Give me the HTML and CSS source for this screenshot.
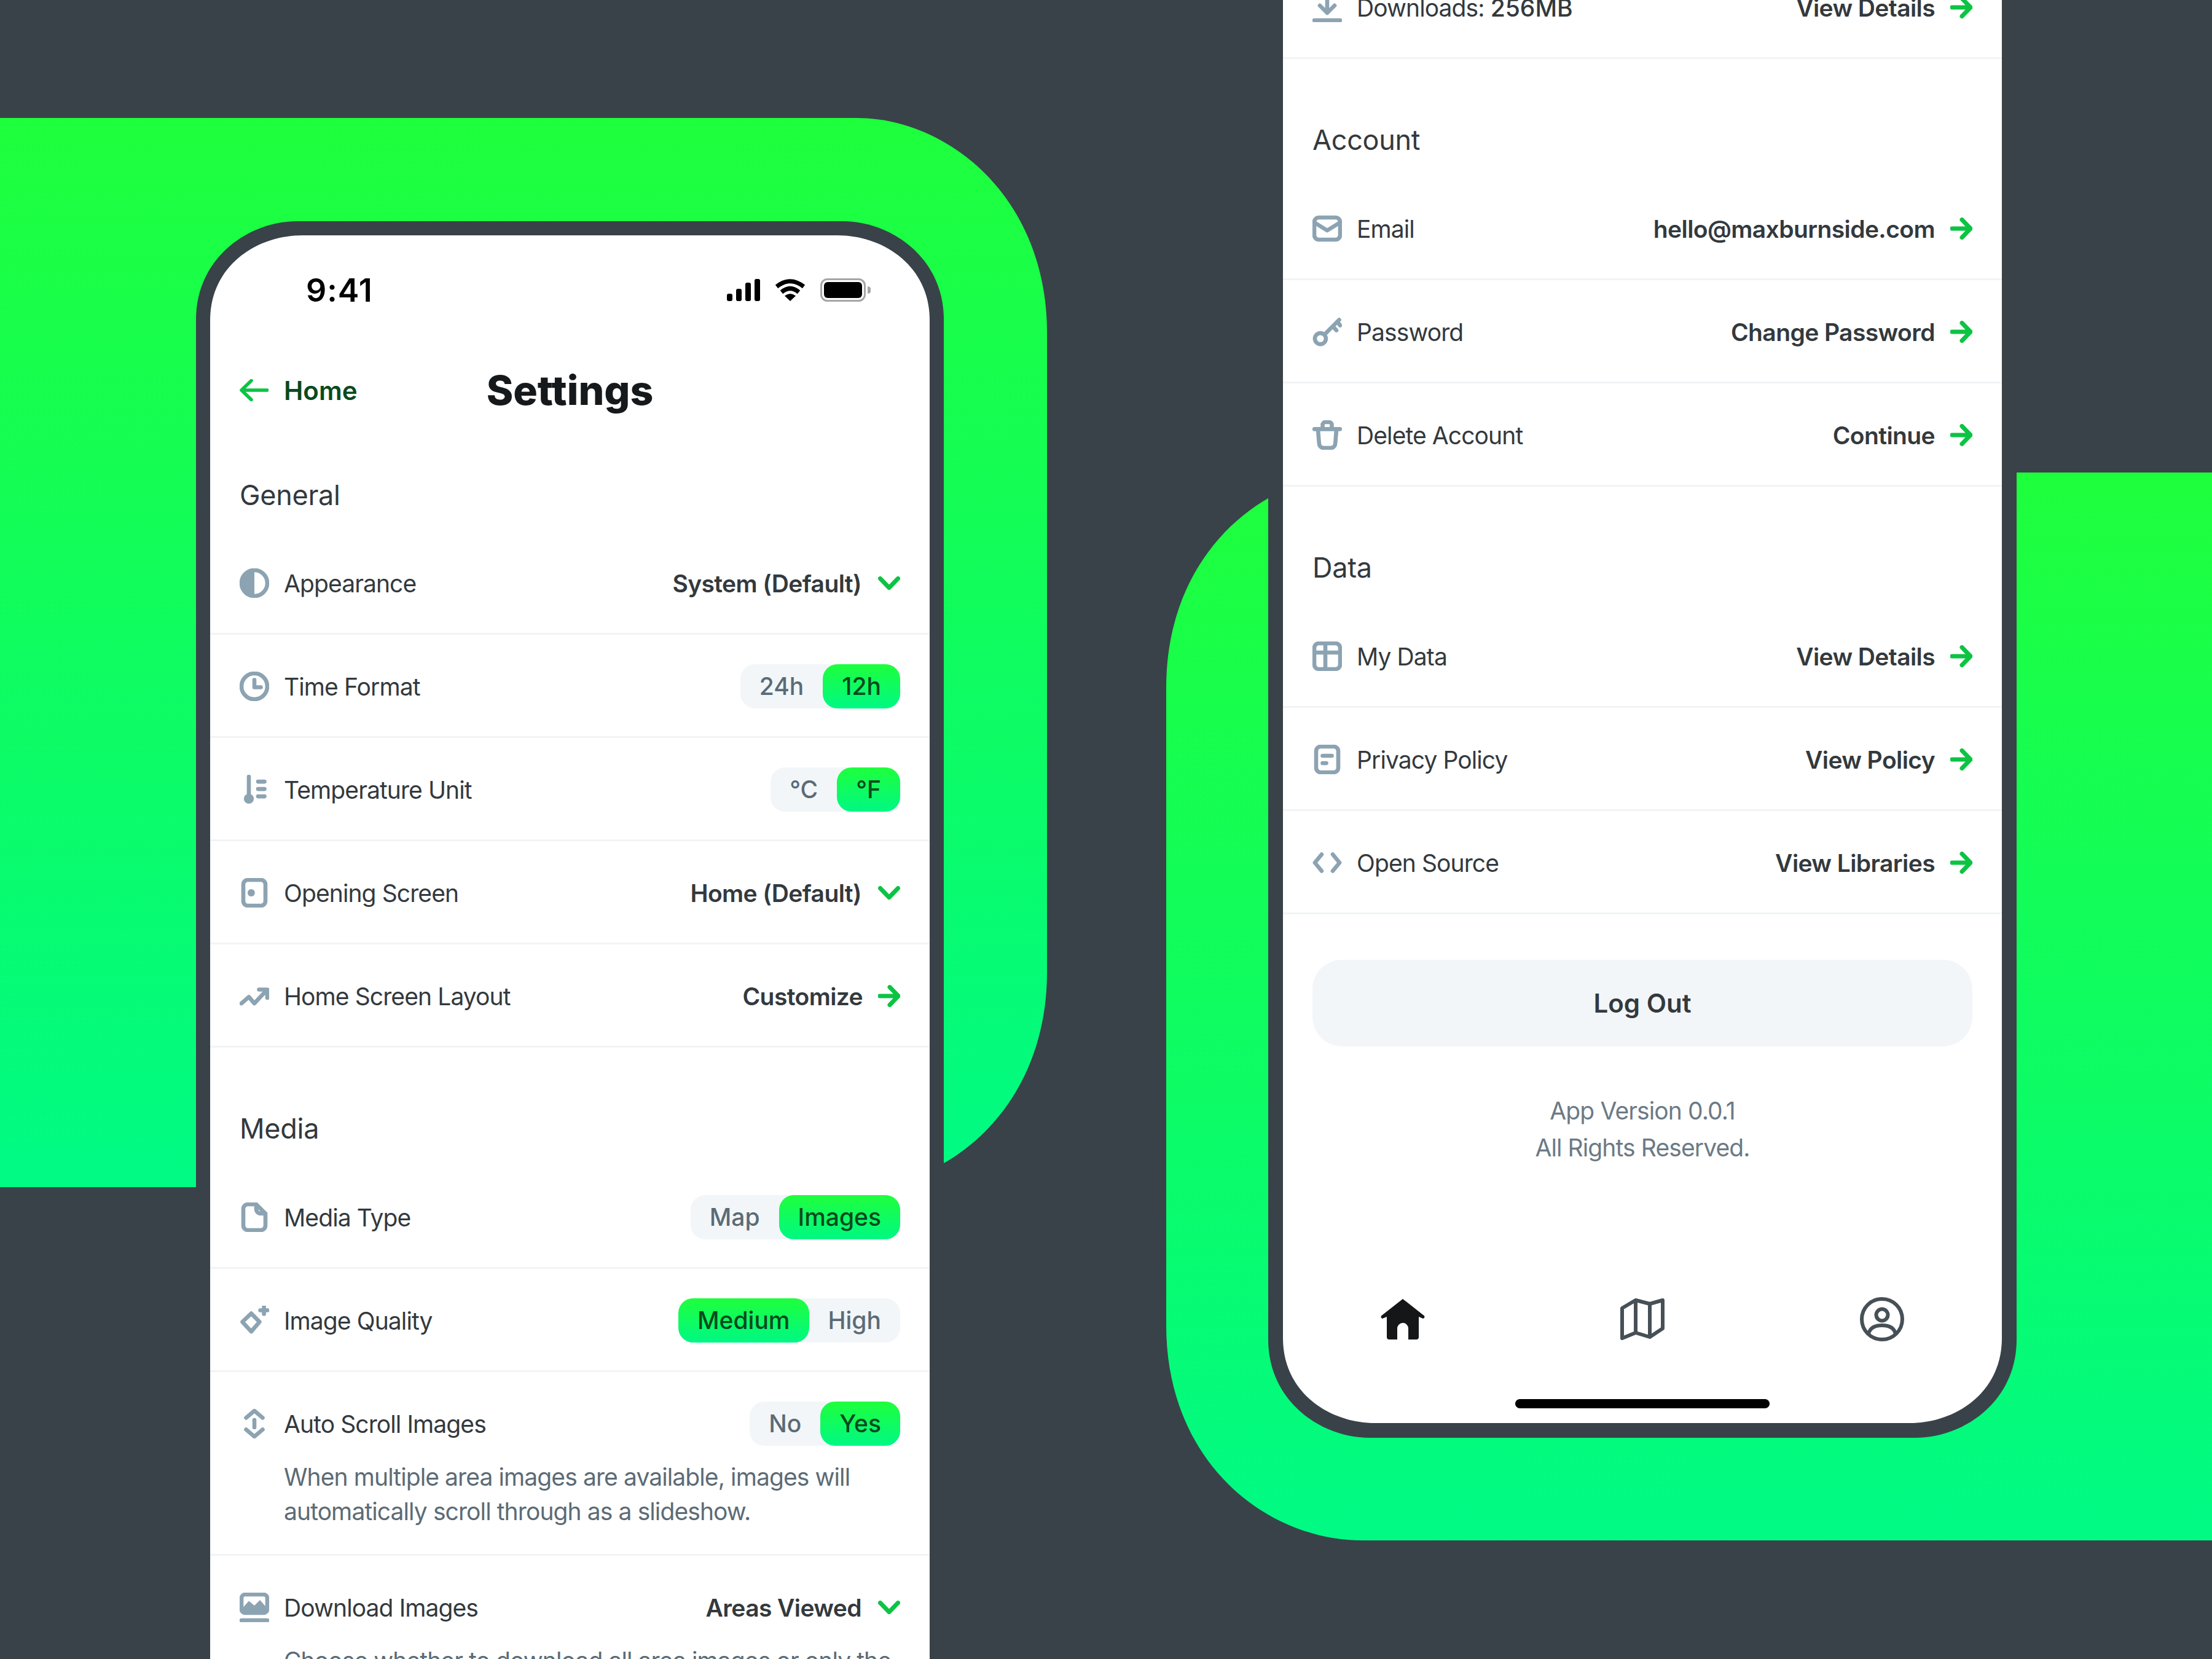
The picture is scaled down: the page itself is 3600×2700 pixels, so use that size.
FILE: index.html
```html
<!DOCTYPE html>
<html>
<head>
    <title>Settings</title>
    <link rel="stylesheet" href="styles.css">
</head>
<body>
    <svg class="sprite">
        <symbol id="arrow" viewBox="0 0 36 36"><path d="M3 18H33M19 3.500L33 18L19 32.500"/></symbol>
        <symbol id="chevron" viewBox="0 0 36 22"><path d="M3.500 3.500L18 18.500L32.500 3.500"/></symbol>
    </svg>

    <div class="stage">
        <div class="panel panel-left"></div>
        <div class="panel panel-right"></div>

        <!-- left phone: top of the settings screen -->
        <div class="phone phone-left">
            <div class="screen">
                <div class="status-bar">
                    <span class="time">9:41</span>
                    <div class="status-icons">
                        <svg class="signal" viewBox="0 0 54 36"><rect x="0" y="24" width="9" height="12" rx="3"/><rect x="15" y="16" width="9" height="20" rx="3"/><rect x="30" y="6" width="9" height="30" rx="3"/><rect x="45" y="0" width="9" height="36" rx="3"/></svg>
                        <svg class="wifi" viewBox="0 0 52 36"><path class="wifi-arc" d="M4 12.500Q26 -5 48 12.500M12 21.500Q26 9.500 40 21.500"/><path d="M26 36L17 27.500Q26 20.500 35 27.500Z"/></svg>
                        <svg class="battery" viewBox="0 0 82 38"><rect class="battery-case" x="1.500" y="1.500" width="71" height="35" rx="10"/><rect x="6" y="6" width="62" height="26" rx="6"/><path class="battery-nub" d="M77 13a6 6 0 0 1 0 12Z"/></svg>
                    </div>
                </div>

                <div class="nav">
                    <a class="back">
                        <svg class="back-arrow" viewBox="0 0 47 36"><path d="M45 18H3M19 2.500L3 18L19 33.500"/></svg>
                        Home
                    </a>
                    <h1>Settings</h1>
                </div>

                <h2 class="section-title first">General</h2>
                <div class="row">
                    <div class="row-main">
                        <svg class="icon" viewBox="0 0 16 16"><circle cx="8" cy="8" r="7"/><path class="fill" d="M8 1a7 7 0 0 0 0 14Z"/></svg>
                        <span class="label">Appearance</span>
                        <span class="value">System (Default)</span>
                        <svg class="chevron"><use href="#chevron"/></svg>
                    </div>
                </div>
                <div class="row">
                    <div class="row-main">
                        <svg class="icon" viewBox="0 0 16 16"><circle cx="8" cy="8" r="7"/><path d="M8 4.500V8.500H11.500"/></svg>
                        <span class="label">Time Format</span>
                        <div class="toggle"><span>24h</span><span class="on">12h</span></div>
                    </div>
                </div>
                <div class="row">
                    <div class="row-main">
                        <svg class="icon" viewBox="0 0 16 16"><path d="M5 1V12"/><circle class="fill" cx="5" cy="13" r="2.700"/><path d="M10 3.700H13.500M10 7.700H13.500M10 11.700H13.500"/></svg>
                        <span class="label">Temperature Unit</span>
                        <div class="toggle"><span>°C</span><span class="on">°F</span></div>
                    </div>
                </div>
                <div class="row">
                    <div class="row-main">
                        <svg class="icon" viewBox="0 0 16 16"><rect x="2" y="1" width="12" height="14" rx="2.500"/><circle class="fill" cx="6.300" cy="8" r="2"/></svg>
                        <span class="label">Opening Screen</span>
                        <span class="value">Home (Default)</span>
                        <svg class="chevron"><use href="#chevron"/></svg>
                    </div>
                </div>
                <div class="row">
                    <div class="row-main">
                        <svg class="icon" viewBox="0 0 16 16"><path d="M1 12L5 8.500L8 12L14.500 5M10.500 4.500H15V9"/></svg>
                        <span class="label">Home Screen Layout</span>
                        <span class="value">Customize</span>
                        <svg class="arrow"><use href="#arrow"/></svg>
                    </div>
                </div>

                <h2 class="section-title">Media</h2>
                <div class="row">
                    <div class="row-main">
                        <svg class="icon" viewBox="0 0 16 16"><path d="M9 1H4.500A2.500 2.500 0 0 0 2 3.500V12.500A2.500 2.500 0 0 0 4.500 15H11.500A2.500 2.500 0 0 0 14 12.500V6L9 1V3.500A2.500 2.500 0 0 0 11.500 6H14"/></svg>
                        <span class="label">Media Type</span>
                        <div class="toggle"><span>Map</span><span class="on">Images</span></div>
                    </div>
                </div>
                <div class="row">
                    <div class="row-main">
                        <svg class="icon" viewBox="0 0 16 16"><path d="M6.300 4.200L10.800 8.800L6.300 14L1.500 8.800Z"/><path d="M13.200 .500V4.500M11.200 2.500H15.200"/></svg>
                        <span class="label">Image Quality</span>
                        <div class="toggle"><span class="on">Medium</span><span>High</span></div>
                    </div>
                </div>
                <div class="row">
                    <div class="row-main">
                        <svg class="icon" viewBox="0 0 16 16"><path d="M3.500 4.800L8 1L12.500 4.800M3.500 11.200L8 15L12.500 11.200M8 6V10"/></svg>
                        <span class="label">Auto Scroll Images</span>
                        <div class="toggle"><span>No</span><span class="on">Yes</span></div>
                    </div>
                    <p class="desc">When multiple area images are available, images will automatically scroll through as a slideshow.</p>
                </div>
                <div class="row">
                    <div class="row-main">
                        <svg class="icon" viewBox="0 0 16 16"><rect x="1" y="1" width="14" height="10" rx="2"/><path class="fill" d="M1 9L5 4.500L8 7L11 4L15 8.500V11H1Z"/><path d="M1 15H15"/></svg>
                        <span class="label">Download Images</span>
                        <span class="value">Areas Viewed</span>
                        <svg class="chevron"><use href="#chevron"/></svg>
                    </div>
                    <p class="desc">Choose whether to download all area images or only the ones you have already viewed.</p>
                </div>
            </div>
        </div>

        <!-- right phone: bottom of the settings screen -->
        <div class="phone phone-right">
            <div class="screen screen-end">
                <div class="row">
                    <div class="row-main">
                        <svg class="icon" viewBox="0 0 16 16"><path d="M8 0V10.500M4 7L8 11L12 7M1 15H15"/></svg>
                        <span class="label">Downloads: <b>256MB</b></span>
                        <span class="value">View Details</span>
                        <svg class="arrow"><use href="#arrow"/></svg>
                    </div>
                </div>

                <h2 class="section-title">Account</h2>
                <div class="row">
                    <div class="row-main">
                        <svg class="icon" viewBox="0 0 16 16"><rect x="1" y="2" width="14" height="12" rx="2.500"/><path d="M1.500 5L8 9L14.500 5"/></svg>
                        <span class="label">Email</span>
                        <span class="value">hello@maxburnside.com</span>
                        <svg class="arrow"><use href="#arrow"/></svg>
                    </div>
                </div>
                <div class="row">
                    <div class="row-main">
                        <svg class="icon" viewBox="0 0 16 16"><circle cx="4.300" cy="11.700" r="3"/><path d="M6.500 9.500L14.500 1.500M11 5L13 7.200M13.500 2.500L15 4.500"/></svg>
                        <span class="label">Password</span>
                        <span class="value">Change Password</span>
                        <svg class="arrow"><use href="#arrow"/></svg>
                    </div>
                </div>
                <div class="row">
                    <div class="row-main">
                        <svg class="icon" viewBox="0 0 16 16"><path d="M1 4.800H15M5.500 4.500V2.500A1.500 1.500 0 0 1 7 1H9A1.500 1.500 0 0 1 10.500 2.500V4.500M3 5L3.600 12.500A2.500 2.500 0 0 0 6 15H10A2.500 2.500 0 0 0 12.400 12.500L13 5"/></svg>
                        <span class="label">Delete Account</span>
                        <span class="value">Continue</span>
                        <svg class="arrow"><use href="#arrow"/></svg>
                    </div>
                </div>

                <h2 class="section-title">Data</h2>
                <div class="row">
                    <div class="row-main">
                        <svg class="icon" viewBox="0 0 16 16"><rect x="1" y="1" width="14" height="14" rx="2.500"/><path d="M1 6H15M7 1V15"/></svg>
                        <span class="label">My Data</span>
                        <span class="value">View Details</span>
                        <svg class="arrow"><use href="#arrow"/></svg>
                    </div>
                </div>
                <div class="row">
                    <div class="row-main">
                        <svg class="icon" viewBox="0 0 16 16"><rect x="2" y="1" width="12" height="14" rx="2.500"/><path d="M5.500 6H10.500M5.500 10H7.500"/></svg>
                        <span class="label">Privacy Policy</span>
                        <span class="value">View Policy</span>
                        <svg class="arrow"><use href="#arrow"/></svg>
                    </div>
                </div>
                <div class="row">
                    <div class="row-main">
                        <svg class="icon" viewBox="0 0 16 16"><path d="M5 3.500L1.300 8L5 12.500M11 3.500L14.700 8L11 12.500"/></svg>
                        <span class="label">Open Source</span>
                        <span class="value">View Libraries</span>
                        <svg class="arrow"><use href="#arrow"/></svg>
                    </div>
                </div>

                <button class="logout">Log Out</button>
                <p class="version">App Version 0.0.1<br>All Rights Reserved.</p>

                <div class="tabs">
                    <svg class="tab-home" viewBox="0 0 72 66"><path d="M36 0L71 27.500Q72.500 31 69 32L62 29V62A4 4 0 0 1 58 66H45V48A9 9 0 0 0 27 48V66H14A4 4 0 0 1 10 62V29L3 32Q-.500 31 1 27.500Z"/></svg>
                    <svg class="tab-line" viewBox="0 0 72 68"><path d="M3 16L25 3L48 9L69 3V49L48 63L25 56L3 65ZM25 3V56M48 9V63"/></svg>
                    <svg class="tab-line" viewBox="0 0 72 72"><circle cx="36" cy="36" r="33"/><circle cx="36" cy="29" r="9.500"/><path d="M14 60Q17 46 36 46Q55 46 58 60"/></svg>
                </div>
                <div class="home-bar"></div>
            </div>
        </div>
    </div>
</body>
</html>
```

FILE: styles.css
```css
* {
    box-sizing: border-box;
}
html, body {
    margin: 0;
    background-color: #394249;
}
body {
    font-family: Inter, "Liberation Sans", sans-serif;
    color: #33393d;
}
.sprite {
    display: none;
}
.stage {
    position: relative;
    width: 3600px;
    height: 2700px;
    overflow: hidden;
}

/* green blocks behind the phones, corners are squircles so clip-path not border-radius */
.panel {
    position: absolute;
    background: linear-gradient(180deg, #1eff3c, #00fa84);
}
.panel-left {
    left: 0;
    top: 192px;
    width: 1704px;
    height: 1740px;
    clip-path: path("M0 0H1394C1544 0 1704 130 1704 350V1390C1704 1610 1544 1740 1394 1740H0Z");
}
.panel-right {
    left: 1898px;
    top: 769px;
    width: 1702px;
    height: 1738px;
    clip-path: path("M1702 0H320C160 0 0 130 0 350V1388C0 1608 160 1738 320 1738H1702Z");
}

.phone {
    position: absolute;
    background-color: #394249;
}
.phone-left {
    left: 319px;
    top: 360px;
    width: 1217px;
    height: 2560px;
    padding: 23px;
    clip-path: path("M0 160C0 60 85 0 165 0H1052C1132 0 1217 60 1217 160V2560H0Z");
}
.phone-left .screen {
    clip-path: path("M0 138C0 50 75 0 150 0H1021C1096 0 1171 50 1171 138V2514H0Z");
}
.phone-right {
    left: 2064px;
    top: -120px;
    width: 1218px;
    height: 2460px;
    padding: 24px;
    clip-path: path("M0 0H1218V2300C1218 2400 1133 2460 1053 2460H165C85 2460 0 2400 0 2300Z");
}
.phone-right .screen {
    clip-path: path("M0 0H1170V2274C1170 2362 1095 2412 1020 2412H150C75 2412 0 2362 0 2274Z");
}
.screen {
    height: 100%;
    overflow: hidden;
    background-color: #fff;
}
.screen-end {
    display: flex;
    flex-direction: column;
    padding-top: 24px;
}

.status-bar {
    display: flex;
    align-items: center;
    justify-content: space-between;
    height: 178px;
    padding: 0 96px 0 156px;
}
.time {
    font-size: 52px;
    font-weight: 600;
    letter-spacing: 1px;
    color: #000;
}
.status-icons {
    display: flex;
    align-items: center;
    gap: 23px;
}
.signal {
    width: 54px;
    height: 36px;
}
.wifi {
    width: 52px;
    height: 36px;
}
.wifi-arc {
    fill: none;
    stroke: #000;
    stroke-width: 7;
}
.battery {
    width: 82px;
    height: 38px;
}
.battery-case {
    fill: none;
    stroke: #a6a6a6;
    stroke-width: 3;
}
.battery-nub {
    fill: #a6a6a6;
}

.nav {
    position: relative;
    display: flex;
    align-items: center;
    height: 148px;
    padding: 0 48px;
}
.back {
    display: flex;
    align-items: center;
    gap: 25px;
    font-size: 42px;
    font-weight: 600;
    color: #0a4a1e;
}
.back-arrow {
    width: 47px;
    height: 36px;
    fill: none;
    stroke: #0cc443;
    stroke-width: 5.500;
    stroke-linecap: round;
    stroke-linejoin: round;
}
h1 {
    position: absolute;
    left: 0;
    right: 0;
    margin: 0;
    font-size: 66px;
    font-weight: 800;
    text-align: center;
    color: #16191b;
}

.section-title {
    height: 192px;
    margin: 0;
    padding: 102px 48px 30px;
    font-size: 45px;
    font-weight: 400;
    letter-spacing: -.3px;
    line-height: 60px;
}
.section-title.first {
    height: 156px;
    padding-top: 67px;
}

.row {
    flex: none;
    padding: 48px 48px 45px;
    border-bottom: 3px solid #f1f4f6;
}
.row-main {
    display: flex;
    align-items: center;
    height: 72px;
}
.icon {
    flex: none;
    width: 48px;
    height: 48px;
    margin-right: 24px;
    fill: none;
    stroke: #8ca3b2;
    stroke-width: 2.200;
    stroke-linecap: round;
    stroke-linejoin: round;
}
.icon .fill {
    fill: #8ca3b2;
    stroke: none;
}
.label {
    flex: 1;
    font-size: 39px;
    letter-spacing: -.9px;
}
.label b {
    font-weight: 500;
    letter-spacing: 0;
}
.value {
    font-size: 39px;
    font-weight: 600;
    letter-spacing: -.6px;
}
.chevron, .arrow {
    flex: none;
    fill: none;
    stroke: #0cc443;
    stroke-width: 7;
    stroke-linecap: round;
    stroke-linejoin: round;
}
.chevron {
    width: 36px;
    height: 22px;
    margin-left: 27px;
}
.arrow {
    width: 36px;
    height: 36px;
    margin-left: 25px;
}
.desc {
    margin: 23px 0 -4px 72px;
    font-size: 39px;
    letter-spacing: -.9px;
    line-height: 56px;
    color: #5c6b75;
}

.toggle {
    display: flex;
    height: 72px;
    border-radius: 24px;
    font-size: 39px;
    font-weight: 500;
    line-height: 72px;
    color: #5b6b76;
    background-color: #f2f6f8;
}
.toggle span {
    padding: 0 31px;
}
.toggle .on {
    border-radius: 24px;
    color: #05491f;
    background: linear-gradient(180deg, #1eff3c, #00f884);
}

.logout {
    flex: none;
    height: 141px;
    margin: 74px 48px 0;
    border: none;
    border-radius: 48px;
    font-family: inherit;
    font-size: 42px;
    font-weight: 600;
    color: #33393d;
    background-color: #f2f6f8;
}
.version {
    margin: 75px 0 0;
    font-size: 39px;
    letter-spacing: -.9px;
    line-height: 60px;
    text-align: center;
    color: #6b7a85;
}
.tabs {
    display: flex;
    justify-content: space-around;
    align-items: center;
    margin-top: auto;
    padding: 0 0 94px;
}
.tabs svg {
    width: 72px;
    height: 72px;
}
.tab-home {
    fill: #141618;
}
.tab-line {
    fill: none;
    stroke: #465056;
    stroke-width: 6;
    stroke-linejoin: round;
}
.home-bar {
    flex: none;
    align-self: center;
    width: 414px;
    height: 15px;
    margin-bottom: 24px;
    border-radius: 8px;
    background-color: #000;
}
```
